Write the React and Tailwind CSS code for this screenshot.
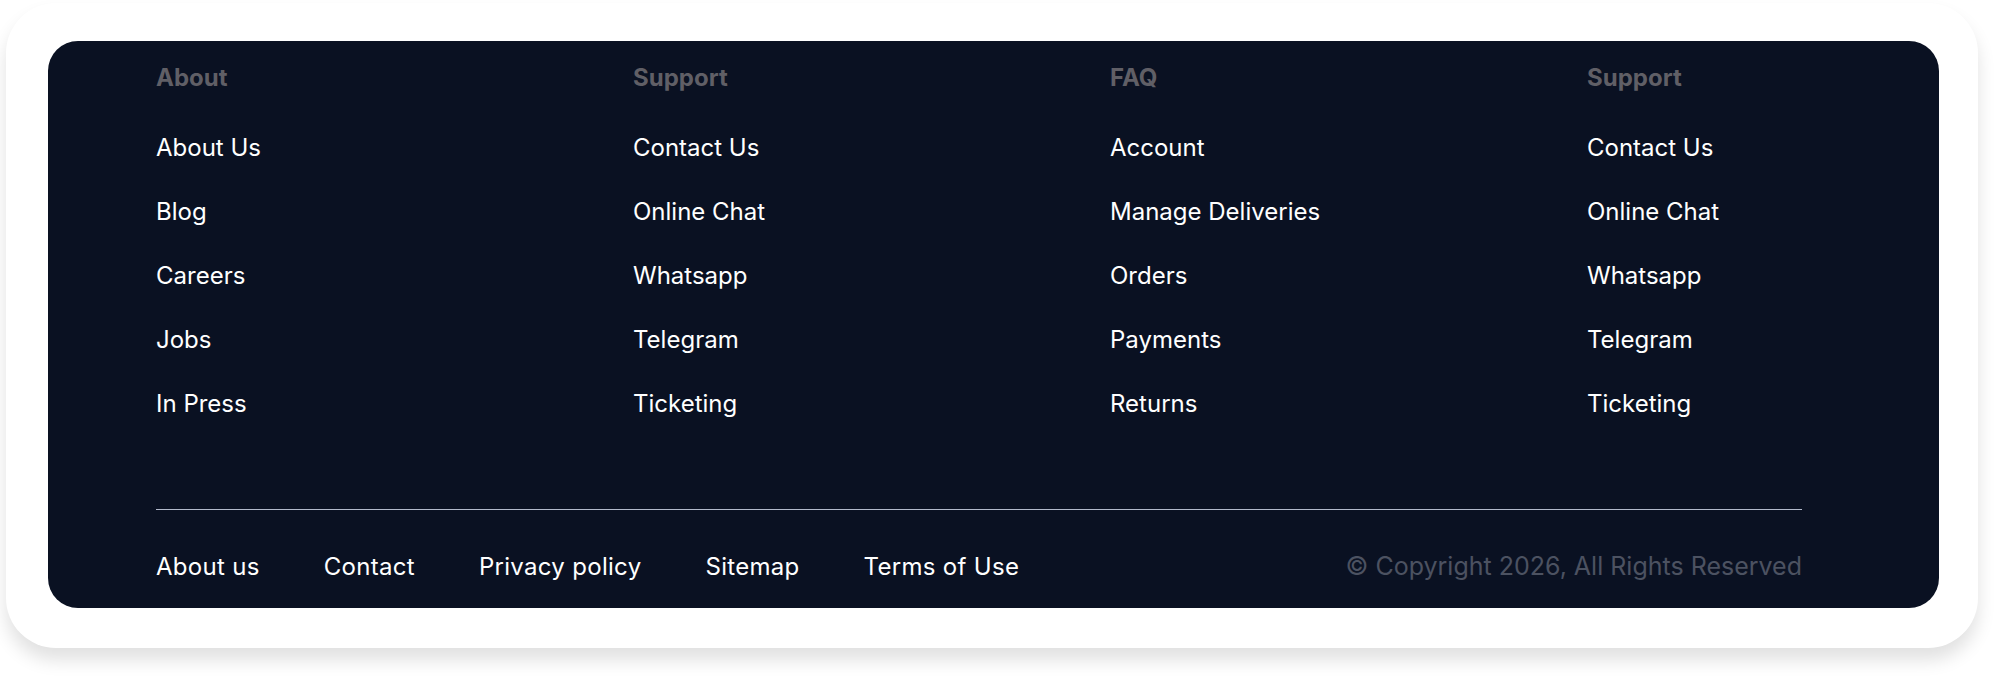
import React from "react";

const columns = [
  { title: "About", links: ["About Us", "Blog", "Careers", "Jobs", "In Press"] },
  { title: "Support", links: ["Contact Us", "Online Chat", "Whatsapp", "Telegram", "Ticketing"] },
  { title: "FAQ", links: ["Account", "Manage Deliveries", "Orders", "Payments", "Returns"] },
  { title: "Support", links: ["Contact Us", "Online Chat", "Whatsapp", "Telegram", "Ticketing"] },
];

const bottomLinks = ["About us", "Contact", "Privacy policy", "Sitemap", "Terms of Use"];

const App = () => {
  return (
    <div className="w-[2000px] h-[676px] bg-white pt-[3px] pl-[6px] overflow-hidden">
      <div className="w-[1972px] rounded-[50px] bg-white shadow-[0_12px_18px_rgba(0,0,0,0.12)] pt-[38px] pl-[42px] pr-[39px] pb-[40px]">
        <footer className="h-[567px] rounded-[30px] bg-[#0a1122] pl-[108px] pr-[137px] pt-[21px] font-['Inter',sans-serif]">
          <div className="grid grid-cols-[477px_477px_477px_1fr]">
            {columns.map((col, i) => (
              <div key={i} className="flex flex-col">
                <h4 className="text-[24px] leading-[32px] font-bold text-[#605f66] mb-[38px]">{col.title}</h4>
                <ul className="flex flex-col gap-[32px]">
                  {col.links.map((l) => (
                    <li key={l} className="text-[24px] leading-[32px] text-white">{l}</li>
                  ))}
                </ul>
              </div>
            ))}
          </div>

          <div className="mt-[89px] border-t border-[#b3bacb]" />

          <div className="mt-[40px] flex items-baseline justify-between">
            <nav className="flex gap-[64px]">
              {bottomLinks.map((l) => (
                <a key={l} className="text-[24px] leading-[32px] text-white tracking-[0.3px]">{l}</a>
              ))}
            </nav>
            <p className="text-[25px] leading-[32px] text-[#4c5261]">
              © Copyright 2026, All Rights Reserved
            </p>
          </div>
        </footer>
      </div>
    </div>
  );
};

export default App;
